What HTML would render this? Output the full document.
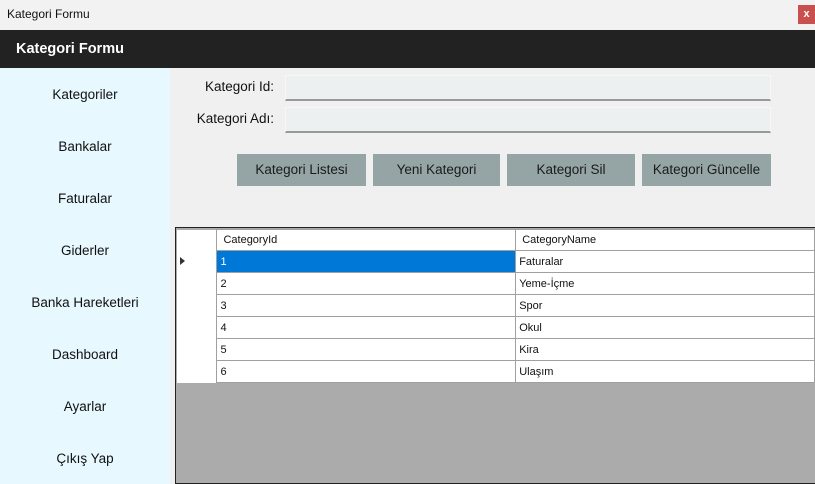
<!DOCTYPE html>
<html><head><meta charset="utf-8"><style>
*{margin:0;padding:0;box-sizing:border-box}
body{width:815px;height:484px;position:relative;background:#f0f0f0;font-family:"Liberation Sans",sans-serif;overflow:hidden;color:#111}
.a{position:absolute}
#title{left:0;top:0;width:815px;height:30px;background:#f2f2f2;font-size:12px;line-height:28px;padding-left:7px}
#x{left:798px;top:5px;width:17px;height:19px;background:#c9504f;color:#fff;font-size:11px;font-weight:bold;text-align:center;line-height:19px}
#hdr{left:0;top:30px;width:815px;height:38px;background:#222;color:#fff;font-weight:bold;font-size:14.5px;line-height:38px;padding-left:16px}
#side{left:0;top:68px;width:170px;height:416px;background:#e7f8ff}
.s{position:absolute;left:0;width:170px;text-align:center;font-size:13.5px}
.lb{font-size:13.5px;text-align:right;width:120px}
.tb{left:285px;width:486px;height:26px;background:#edf0f1;border:1px solid #f8f8f8;border-bottom:2px solid #999}
.bt{top:154px;height:32px;background:#95a5a6;font-size:13.5px;text-align:center;line-height:32px;color:#1a1a1a}
#grid{left:175px;top:227px;width:640px;height:257px;background:#ababab;border:1px solid #222;border-right:none}
table{position:absolute;left:1px;top:1px;border-collapse:collapse;font-size:11px}
td{height:22px;border:1px solid #a0a0a0;background:#fff;padding-left:3px;color:#111}
td.r{border-top:none;border-bottom:none;border-left:none}
tr:first-child td{height:21px;padding-left:6px}
</style></head><body>
<div id="title" class="a">Kategori Formu</div>
<div id="x" class="a">x</div>
<div id="hdr" class="a">Kategori Formu</div>
<div id="side" class="a">
<div class="s" style="top:19px">Kategoriler</div>
<div class="s" style="top:71px">Bankalar</div>
<div class="s" style="top:123px">Faturalar</div>
<div class="s" style="top:175px">Giderler</div>
<div class="s" style="top:227px">Banka Hareketleri</div>
<div class="s" style="top:279px">Dashboard</div>
<div class="s" style="top:331px">Ayarlar</div>
<div class="s" style="top:383px">Çıkış Yap</div>
</div>
<div class="a lb" style="left:154px;top:79px">Kategori Id:</div>
<div class="a lb" style="left:154px;top:111px">Kategori Adı:</div>
<div class="a tb" style="top:75px"></div>
<div class="a tb" style="top:107px"></div>
<div class="a bt" style="left:237px;width:129px">Kategori Listesi</div>
<div class="a bt" style="left:373px;width:127px">Yeni Kategori</div>
<div class="a bt" style="left:507px;width:128px">Kategori Sil</div>
<div class="a bt" style="left:642px;width:129px">Kategori Güncelle</div>
<div id="grid" class="a">
<table>
<tr><td class="r" style="width:40px"></td><td style="width:299px">CategoryId</td><td style="width:299px">CategoryName</td></tr>
<tr><td class="r"><span style="display:inline-block;width:0;height:0;border-left:5px solid #333;border-top:4px solid transparent;border-bottom:4px solid transparent"></span></td><td style="background:#0078d7;color:#fff">1</td><td>Faturalar</td></tr>
<tr><td class="r"></td><td>2</td><td>Yeme-İçme</td></tr>
<tr><td class="r"></td><td>3</td><td>Spor</td></tr>
<tr><td class="r"></td><td>4</td><td>Okul</td></tr>
<tr><td class="r"></td><td>5</td><td>Kira</td></tr>
<tr><td class="r"></td><td>6</td><td>Ulaşım</td></tr>
</table>
</div>
</body></html>
